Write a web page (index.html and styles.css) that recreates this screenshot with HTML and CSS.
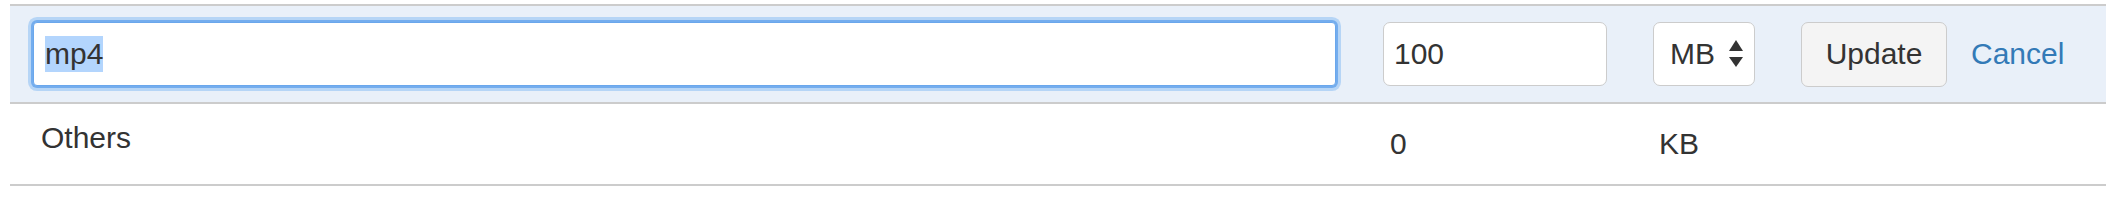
FILE: index.html
```html
<!DOCTYPE html>
<html>
<head>
<meta charset="utf-8" />
<title>file types</title>
<link rel="stylesheet" href="styles.css">
</head>
<body>
<div id="wrap">
	<div class="list">
		<!-- edit row -->
		<div class="row edit">
			<div class="cell c1">
				<div class="field focus"><span class="sel">mp4</span></div>
			</div>
			<div class="cell c2">
				<div class="field num">100</div>
			</div>
			<div class="cell c3">
				<div class="field unit">
					<span>MB</span>
					<svg class="arrows" width="14" height="28" viewBox="0 0 14 28">
						<polygon points="7,0 14,11 0,11" fill="#333" />
						<polygon points="0,17 14,17 7,27" fill="#333" />
					</svg>
				</div>
			</div>
			<div class="cell c4">
				<button class="btn">Update</button>
				<a href="#" class="cancel">Cancel</a>
			</div>
		</div>
		<!-- normal row -->
		<div class="row">
			<div class="cell name">Others</div>
			<div class="cell size">0</div>
			<div class="cell kb">KB</div>
			<div class="cell"></div>
		</div>
	</div>
</div>
</body>
</html>
```
FILE: styles.css
```css
	/** common **/
	*{margin:0; padding:0; box-sizing:border-box;}
	body{
		background:#fff;
		color:#333;
		font-size:30px;
		line-height:34px;
		font-family:"Liberation Sans", Arial, sans-serif;
	}
	#wrap{padding:4px 0 0 10px;}

	/* list */
	.list{border-top:2px solid #ccc;}
	.row{
		display:grid;
		grid-template-columns:1352px 270px 148px 1fr;
		height:82px;
		border-bottom:2px solid #ccc;
	}
	.row.edit{
		height:98px;
		align-items:center;
		background-color:#e9f0f9;
	}
	.cell{padding-left:21px;}
	.row .name{padding:17px 0 0 31px;}
	.row .size{padding:23px 0 0 28px;}
	.row .kb{padding:23px 0 0 27px;}

	/* fields */
	.field{
		height:64px;
		padding:0 11px;
		display:flex;
		align-items:center;
		background:#fff;
		border:1px solid #ccc;
		border-radius:7px;
		white-space:nowrap;
	}
	.field.focus{
		width:1303px;
		margin-left:2px;
		border-color:#6aa7ec;
		border-radius:4px;
		box-shadow:0 0 0 2px #74adee, 0 0 0 5px #b6d5f6;
	}
	.sel{background:#b3d5fd; padding:1px 0;}
	.field.num{width:224px; padding-left:10px;}
	.field.unit{width:102px; padding-left:16px; justify-content:space-between; padding-right:11px;}
	.arrows{display:block;}

	.c4{display:flex; align-items:center;}
	.btn{
		width:146px;
		height:65px;
		font:inherit;
		color:#333;
		background-color:#f4f4f4;
		border:1px solid #ccc;
		border-radius:7px;
	}
	.cancel{margin-left:24px; color:#337ab7; text-decoration:none;}
```
